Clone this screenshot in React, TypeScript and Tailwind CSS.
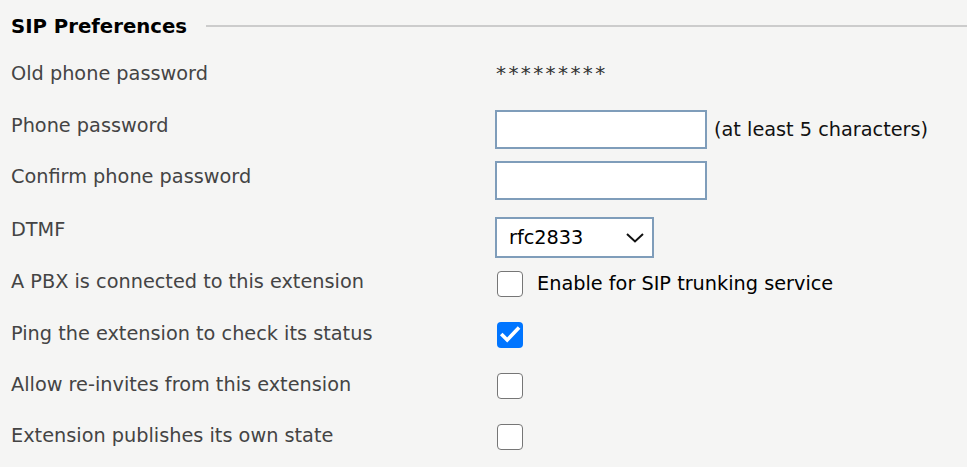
import type { ReactNode } from "react"

const font = { fontFamily: '"DejaVu Sans", Verdana, sans-serif' }

const Checkbox = ({ checked = false, className = "" }: { checked?: boolean; className?: string }) =>
  checked ? (
    <span className={`flex h-[26px] w-[26px] shrink-0 items-center justify-center rounded-[4px] bg-[#0075ff] ${className}`}>
      <svg width="26" height="26" viewBox="0 0 26 26" fill="none">
        <path d="M5.5 13.2 L10.2 18 L20.8 6.8" stroke="white" strokeWidth="3.6" strokeLinecap="square" />
      </svg>
    </span>
  ) : (
    <span className={`block h-[26px] w-[26px] shrink-0 rounded-[4px] border border-[#767676] bg-white ${className}`} />
  )

const Row = ({
  label,
  height,
  labelPad = "pt-px",
  children,
}: {
  label: string
  height: string
  labelPad?: string
  children?: ReactNode
}) => (
  <div className={`flex items-start ${height}`}>
    <div className={`w-[484px] shrink-0 text-[#444] ${labelPad}`}>{label}</div>
    <div className="flex items-center text-[#111]">{children}</div>
  </div>
)

export default function App() {
  return (
    <div className="min-h-[467px] w-full bg-stone-100 pt-[14px] pl-[11px] text-[19.3px] leading-6" style={font}>
      {/* fieldset style heading with a rule running to the right edge */}
      <div className="flex h-6 items-center gap-[19px]">
        <h2 className="pt-px text-[19.7px] font-bold text-black">SIP Preferences</h2>
        <div className="h-[2px] flex-1 bg-[#cccccc]" />
      </div>

      <div className="mt-[23px]">
        <Row label="Old phone password" height="h-[49px]">
          <span className="pl-px text-[20px] tracking-[2.4px] text-[#333]">*********</span>
        </Row>

        <Row label="Phone password" height="h-[51px]" labelPad="pt-[4px]">
          <input type="password" className="h-[39px] w-[212px] border-2 border-[#7f9dba] bg-white outline-none" />
          <span className="ml-[7px]">(at least 5 characters)</span>
        </Row>

        <Row label="Confirm phone password" height="h-[56px]" labelPad="pt-[4px]">
          <input type="password" className="h-[39px] w-[212px] border-2 border-[#7f9dba] bg-white outline-none" />
        </Row>

        <Row label="DTMF" height="h-[52px]">
          <div className="flex h-[41px] w-[159px] items-center justify-between border-2 border-[#7f9dba] bg-white pl-[12px] pr-[8px] text-black">
            <span>rfc2833</span>
            <svg width="18" height="10" viewBox="0 0 18 10" fill="none">
              <path d="M1 1 L9 8.5 L17 1" stroke="#111" strokeWidth="2" />
            </svg>
          </div>
        </Row>

        <Row label="A PBX is connected to this extension" height="h-[52px]">
          <Checkbox className="ml-[2px] mt-[2px]" />
          <span className="ml-[14px] mt-[1px] text-black">Enable for SIP trunking service</span>
        </Row>

        <Row label="Ping the extension to check its status" height="h-[51px]">
          <Checkbox checked className="ml-[2px] mt-px" />
        </Row>

        <Row label="Allow re-invites from this extension" height="h-[51px]">
          <Checkbox className="ml-[2px] mt-px" />
        </Row>

        <Row label="Extension publishes its own state" height="h-[44px]">
          <Checkbox className="ml-[2px] mt-px" />
        </Row>
      </div>
    </div>
  )
}
